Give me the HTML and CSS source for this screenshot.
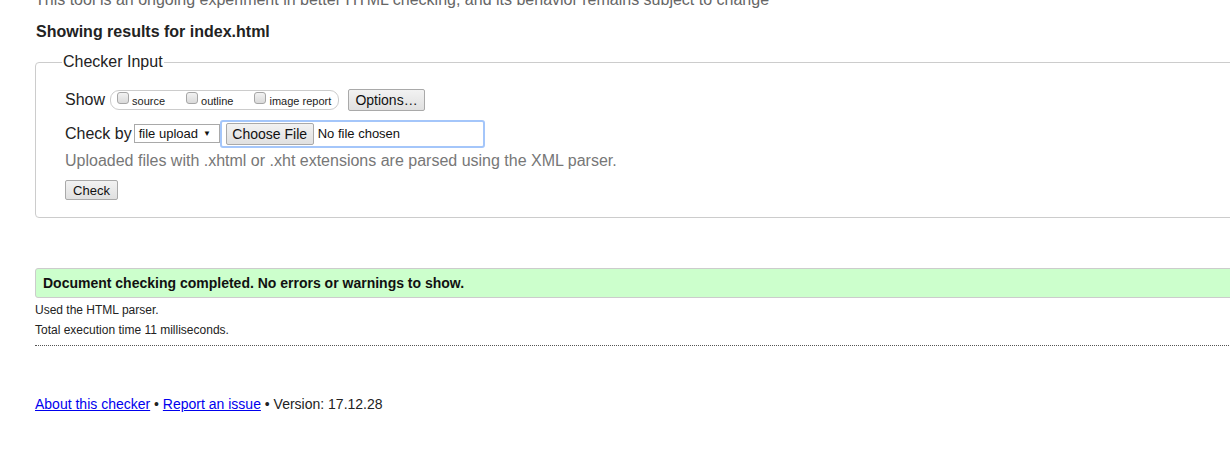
FILE: index.html
```html
<!DOCTYPE html>
<html>
<head>
<meta charset="utf-8">
<title>Nu Html Checker</title>
<link rel="stylesheet" href="styles.css">
</head>
<body>
<div class="page">
  <p class="intro">This tool is an ongoing experiment in better HTML checking, and its behavior remains subject to change</p>
  <p class="showing">Showing results for index.html</p>
  <fieldset class="checker">
    <legend class="legend">Checker Input</legend>
    <div class="row row-show">
      <span class="label">Show</span>
      <span class="pill">
        <label class="opt opt-source"><input type="checkbox" class="cb"><span>source</span></label>
        <label class="opt opt-outline"><input type="checkbox" class="cb"><span>outline</span></label>
        <label class="opt opt-image"><input type="checkbox" class="cb"><span>image report</span></label>
      </span>
      <button class="btn btn-options" type="button">Options…</button>
    </div>
    <div class="row row-check">
      <span class="label">Check by</span>
      <span class="select">file upload <span class="arrow">▼</span></span>
      <span class="file">
        <button class="btn btn-choose" type="button">Choose File</button>
        <span class="nofile">No file chosen</span>
      </span>
    </div>
    <p class="hint">Uploaded files with .xhtml or .xht extensions are parsed using the XML parser.</p>
    <button class="btn btn-check" type="button">Check</button>
  </fieldset>
  <div class="success">Document checking completed. No errors or warnings to show.</div>
  <p class="info">Used the HTML parser.</p>
  <p class="info">Total execution time <span class="num">11</span> milliseconds.</p>
  <hr class="sep">
  <p class="footer"><a href="#">About this checker</a> • <a href="#">Report an issue</a> • Version: 17.12.28</p>
</div>
</body>
</html>
```
FILE: styles.css
```css
html, body {
  margin: 0;
  padding: 0;
  overflow: hidden;
  background: #fff;
}
body {
  font-family: "Liberation Sans", Arial, sans-serif;
  color: #222;
}
.page {
  width: 1260px;
  padding-left: 35px;
}
.intro {
  margin: -10px 0 0 0;
  font-size: 16px;
  line-height: 20px;
  color: #666;
  white-space: nowrap;
}
.showing {
  margin: 12px 0 0 1px;
  font-size: 16px;
  line-height: 20px;
  font-weight: bold;
  color: #222;
}
.checker {
  margin: 10px 0 0 0;
  border: 1px solid #ccc;
  border-radius: 4px;
  padding: 17px 0 17px 29px;
  min-width: 0;
}
.legend {
  padding: 0 1px;
  margin-left: -3px;
  font-size: 16px;
  line-height: 20px;
  color: #222;
}
.row {
  display: flex;
  align-items: center;
}
.row-show {
  height: 22px;
}
.label {
  font-size: 16px;
  color: #222;
}
.pill {
  display: flex;
  align-items: center;
  margin-left: 5px;
  height: 18px;
  border: 1px solid #ccc;
  border-radius: 9px;
  padding: 0 6px 0 6px;
  width: 215px;
}
.opt {
  display: flex;
  align-items: center;
  font-size: 11px;
  color: #222;
}
.opt span {
  margin-left: 3px;
  margin-top: 2px;
}
.opt-outline {
  margin-left: 21px;
}
.opt-image {
  margin-left: 21px;
}
.cb {
  appearance: none;
  -webkit-appearance: none;
  margin: -4px 0 0 0;
  width: 12px;
  height: 12px;
  border: 1px solid #a6a6a6;
  border-radius: 3px;
  background: linear-gradient(#f2f2f2, #dadada);
  box-sizing: border-box;
}
.btn {
  font-family: "Liberation Sans", Arial, sans-serif;
  color: #111;
  background: linear-gradient(#f2f2f2, #e0e0e0);
  border: 1px solid #a9a9a9;
  border-radius: 2px;
  padding: 0;
  box-sizing: border-box;
}
.btn-options {
  margin-left: 9px;
  width: 77px;
  height: 22px;
  font-size: 14px;
}
.row-check {
  margin-top: 9px;
  height: 27px;
}
.select {
  display: flex;
  align-items: center;
  margin-left: 2px;
  width: 86px;
  height: 19px;
  box-sizing: border-box;
  border: 1px solid #a9a9a9;
  font-size: 13px;
  color: #111;
  padding-left: 4px;
}
.arrow {
  font-size: 8px;
  margin-left: 5px;
}
.file {
  display: flex;
  align-items: center;
  margin-left: 0;
  width: 265px;
  height: 28px;
  box-sizing: border-box;
  border: 2px solid #a4c6fa;
  border-radius: 3px;
  padding-left: 4px;
}
.btn-choose {
  width: 88px;
  height: 22px;
  font-size: 14px;
}
.nofile {
  margin-left: 4px;
  font-size: 13px;
  color: #111;
}
.hint {
  margin: 4px 0 0 0;
  font-size: 16px;
  line-height: 20px;
  color: #777;
}
.btn-check {
  display: block;
  margin-top: 9px;
  width: 53px;
  height: 20px;
  font-size: 13px;
}
.success {
  margin-top: 50px;
  height: 30px;
  box-sizing: border-box;
  border: 1px solid #ccc;
  border-radius: 3px;
  background: #ccffcc;
  font-weight: bold;
  font-size: 14px;
  line-height: 28px;
  padding-left: 7px;
  color: #111;
}
.info {
  margin: 4px 0 0 0;
  font-size: 12px;
  line-height: 16px;
  color: #222;
}
.sep {
  margin: 7px 0 0 0;
  border: 0;
  border-top: 1px dotted #555;
  height: 0;
}
.footer {
  margin: 49px 0 0 0;
  font-size: 14px;
  line-height: 18px;
  color: #222;
}
.footer a {
  color: #00e;
  text-decoration: underline;
}
```
